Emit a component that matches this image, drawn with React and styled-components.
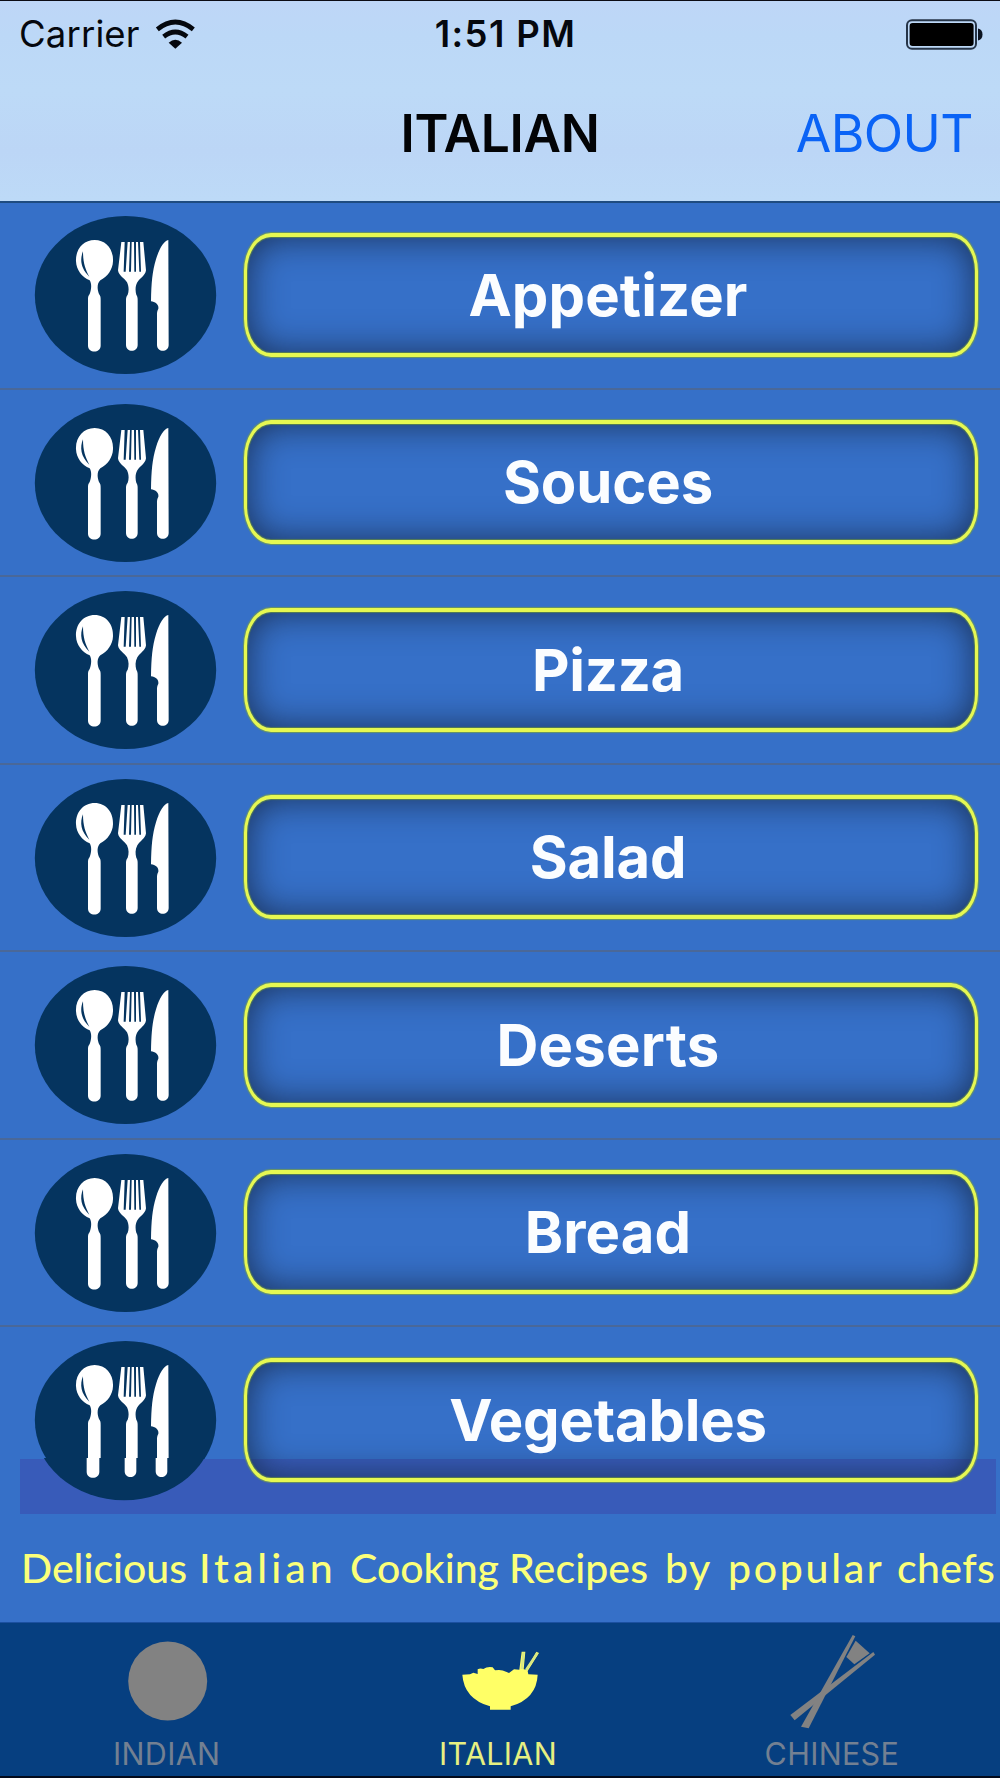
import React from "react";
import styled, { createGlobalStyle } from "styled-components";

const GlobalStyle = createGlobalStyle`
  * { box-sizing: border-box; }
  body { margin: 0; background: #3670c8; }
`;

const Screen = styled.div`
  width: 1000px;
  height: 1778px;
  display: flex;
  flex-direction: column;
  overflow: hidden;
  background: #3670c8;
  border-top: 1px solid #0b0b14;
  border-bottom: 2px solid #020a1c;
  font-family: Inter, "Liberation Sans", sans-serif;
`;

const Header = styled.header`
  flex: none;
  height: 201px;
  position: relative;
  background: linear-gradient(#bed6f7 0, #bcd8f7 34px, #bddaf7 90px, #bcd6f6 150px, #bddaf7 199px);
  border-bottom: 1px solid #1f4c80;
  box-shadow: 0 1px 0 #1f4c80;
`;

const StatusBar = styled.div`
  height: 66px;
  display: grid;
  grid-template-columns: 1fr auto 1fr;
  align-items: center;
  padding: 0 17px 0 19px;
`;

const StatusSide = styled.div`
  display: flex;
  align-items: center;
  gap: ${(p) => p.$gap || 0}px;
  justify-content: ${(p) => p.$align || "flex-start"};
`;

const StatusText = styled.span`
  font-size: 36.5px;
  line-height: 44px;
  font-weight: ${(p) => p.$weight || 400};
  letter-spacing: ${(p) => p.$spacing || 0}px;
  padding-left: ${(p) => p.$indent || 0}px;
  color: #05080e;
`;

const NavBar = styled.nav`
  height: 132px;
  display: grid;
  grid-template-columns: 1fr auto 1fr;
  align-items: center;
  padding-right: 27px;
  padding-left: 27px;
`;

const Title = styled.h1`
  grid-column: 2;
  margin: 0;
  font-size: 51.5px;
  line-height: 60px;
  font-weight: 600;
  letter-spacing: -0.3px;
  color: #030406;
`;

const NavLink = styled.a`
  justify-self: end;
  font-size: 51.5px;
  line-height: 60px;
  letter-spacing: -0.6px;
  color: #0a63f6;
`;

const List = styled.main`
  flex: none;
  display: flex;
  flex-direction: column;
`;

const Row = styled.div`
  height: 187.5px;
  display: flex;
  align-items: center;
  gap: 28px;
  padding: 0 22px 0 35px;
  border-bottom: 2px solid ${(p) => (p.$last ? "transparent" : "#4a6899")};
  background: ${(p) =>
    p.$last ? "linear-gradient(#385bb9, #385bb9) 20px 132px / 976px 55px no-repeat" : "none"};
`;

const CategoryButton = styled.button`
  flex: 1;
  height: 124px;
  margin: 0;
  padding: 0 6px 0 0;
  border: solid #e6f851;
  border-width: 4px 3px;
  border-radius: 27px / 38px;
  background: transparent;
  box-shadow: 0 0 1px 1px rgba(120, 160, 70, 0.8), inset 0 0 1px 1px rgba(95, 135, 70, 0.85),
    inset 0 0 36px rgba(24, 46, 84, 0.98);
  font-family: inherit;
  font-size: 58px;
  line-height: 70px;
  font-weight: 700;
  letter-spacing: ${(p) => p.$spacing}px;
  color: #fbfdff;
`;

const Tagline = styled.p`
  flex: 1;
  margin: 0;
  padding-left: 21px;
  display: flex;
  align-items: center;
  font-family: Lato, sans-serif;
  font-size: 41px;
  line-height: 50px;
  font-weight: 500;
  white-space: pre;
  color: #fbff7a;
`;

const Word = styled.span`
  flex: none;
  width: ${(p) => p.$width}px;
  letter-spacing: ${(p) => p.$spacing}px;
`;

const TabBar = styled.footer`
  flex: none;
  height: 154px;
  display: grid;
  grid-template-columns: repeat(3, 1fr);
  background: #063f80;
  border-top: 1px solid #1b50a0;
`;

const Tab = styled.div`
  display: flex;
  flex-direction: column;
  align-items: center;
  padding-top: 1px;
  color: ${(p) => (p.$active ? "#ffff66" : "#828282")};
`;

const TabLabel = styled.span`
  margin-top: 2px;
  padding-right: ${(p) => p.$nudge || 0}px;
  font-size: 30.5px;
  line-height: 36px;
  letter-spacing: ${(p) => p.$spacing}px;
  color: ${(p) => (p.$active ? "#e6f081" : "#738092")};
`;

const Icon = styled.svg`
  display: block;
  flex: none;
  overflow: visible;
`;

const RowIcon = styled(Icon)`
  margin-top: 1px;
`;

function WifiIcon() {
  return (
    <Icon width="39" height="29" viewBox="470 56 117 87">
      <g fill="none" stroke="#05080e">
        <path d="M474 84 Q528 40 582 84" strokeWidth="14" />
        <path d="M493 106 Q528 78 563 106" strokeWidth="14" />
      </g>
      <path d="M508 124 Q528 106 548 124 L528 142 Z" fill="#05080e" />
    </Icon>
  );
}

function BatteryIcon() {
  return (
    <Icon width="78" height="31" viewBox="0 0 78 31">
      <rect x="2" y="1.2" width="69" height="28.6" rx="5" fill="none" stroke="#263548" strokeWidth="2" />
      <rect x="4.6" y="4" width="64" height="23" rx="3" fill="#000" />
      <path d="M73 9.5 Q77.5 10.5 77.5 15.5 Q77.5 20.5 73 21.5 Z" fill="#0b1320" />
    </Icon>
  );
}

function Cutlery() {
  return (
    <>
      <ellipse cx="376.5" cy="287" rx="272" ry="237" fill="#05345f" />
      <g fill="#fff">
        <path d="M284 122 C318 122 341 150 339 186 C338 212 322 232 301 243 C291 252 291 268 297 284 C302 290 302 294 302 302 V439 C302 462 264 462 264 439 V302 C264 294 264 290 269 284 C275 268 275 252 269 243 C246 234 229 212 228 186 C226 150 250 122 284 122 Z" />
        <path d="M364 128 H374 L371 217 H377 L383 128 H390 L387 217 H393 L395 128 H402 L403 217 H408 L408 128 H414 L418 217 H423 L420 128 H430 L438 213 C436 230 420 235 412 249 C405 262 406 275 409 286 C413 292 413 297 413 304 V437 C413 460 378 460 378 437 V304 C378 297 378 292 383 286 C387 275 387 262 381 249 C373 235 356 230 354 213 Z" />
        <path d="M505 122 C492 124 478 147 468 180 C457 216 454 250 453 306 C466 307 477 316 475 328 C471 335 471 340 471 348 V437 C471 460 506 460 506 437 Z" />
      </g>
      <path d="M249 156 C239 180 242 208 268 232 C256 210 249 190 249 156 Z" fill="#05345f" />
    </>
  );
}

function CutleryIcon({ split }) {
  return (
    <RowIcon width="181" height="158" viewBox="105 50 543 474">
      {split ? (
        <>
          <clipPath id="cutlery-upper"><rect x="90" y="40" width="580" height="364" /></clipPath>
          <clipPath id="cutlery-lower"><rect x="90" y="401" width="580" height="140" /></clipPath>
          <g clipPath="url(#cutlery-upper)"><Cutlery /></g>
          <g clipPath="url(#cutlery-lower)"><g transform="translate(-4 4)"><Cutlery /></g></g>
        </>
      ) : (
        <Cutlery />
      )}
    </RowIcon>
  );
}

function PlateIcon() {
  return (
    <Icon width="120" height="110" viewBox="107 1624 120 110">
      <circle cx="167.7" cy="1681" r="39.5" fill="currentColor" />
    </Icon>
  );
}

function BowlIcon() {
  return (
    <Icon width="120" height="110" viewBox="120 12 360 330">
      <g fill="currentColor">
        <path d="M187 164 L210 163 L220 158 L233 162 L233 148 Q241 143 250 147 Q262 139 278 142 L285 151 Q304 147 318 155 L327 159 L342 148 L358 149 L365 95 L376 95 L371 148 L379 149 L409 95 L417 99 L383 153 L385 163 L413 164 Q410 236 332 259 V269 H270 V259 Q192 236 187 164 Z" />
      </g>
      <path d="M371 97 L365 147 M412 99 L378 150" stroke="#d8e884" strokeWidth="7" fill="none" />
    </Icon>
  );
}

function ChopsticksIcon() {
  return (
    <Icon width="120" height="110" viewBox="159 42 360 330">
      <g fill="currentColor">
        <path d="M398 75 L406 79 L266 355 L243 350 Z" />
        <path d="M460 126 L465 134 L224 331 L211 315 Z" />
        <path d="M407 92 L449 130 L403 163 L379 141 Z" />
      </g>
    </Icon>
  );
}

const categories = [
  { name: "Appetizer", spacing: 0.1 },
  { name: "Souces", spacing: -0.1 },
  { name: "Pizza", spacing: -0.3 },
  { name: "Salad", spacing: -0.2 },
  { name: "Deserts", spacing: 0.2 },
  { name: "Bread", spacing: 0.1 },
  { name: "Vegetables", spacing: -0.25 },
];

const tagline = [
  { word: "Delicious", width: 178, spacing: 0 },
  { word: "Italian", width: 151, spacing: 4 },
  { word: "Cooking", width: 159, spacing: 0 },
  { word: "Recipes", width: 156, spacing: 0.1 },
  { word: "by", width: 63, spacing: 1.5 },
  { word: "popular", width: 169, spacing: 2.7 },
  { word: "chefs", width: 103, spacing: 0.4 },
];

const tabs = [
  { name: "INDIAN", icon: PlateIcon, spacing: 0.35 },
  { name: "ITALIAN", icon: BowlIcon, spacing: 0.3, active: true, nudge: 4 },
  { name: "CHINESE", icon: ChopsticksIcon, spacing: 0.3, nudge: 3 },
];

export default function App() {
  return (
    <>
      <GlobalStyle />
      <Screen>
        <Header>
          <StatusBar>
            <StatusSide $gap={16}>
              <StatusText $spacing={0.15}>Carrier</StatusText>
              <WifiIcon />
            </StatusSide>
            <StatusText $weight={600} $spacing={1.4} $indent={9}>1:51 PM</StatusText>
            <StatusSide $align="flex-end">
              <BatteryIcon />
            </StatusSide>
          </StatusBar>
          <NavBar>
            <Title>ITALIAN</Title>
            <NavLink>ABOUT</NavLink>
          </NavBar>
        </Header>
        <List>
          {categories.map((c, i) => {
            const last = i === categories.length - 1;
            return (
              <Row key={c.name} $last={last}>
                <CutleryIcon split={last} />
                <CategoryButton $spacing={c.spacing}>{c.name}</CategoryButton>
              </Row>
            );
          })}
        </List>
        <Tagline>
          {tagline.map(({ word, width, spacing }) => (
            <Word key={word} $width={width} $spacing={spacing}>
              {word}
            </Word>
          ))}
        </Tagline>
        <TabBar>
          {tabs.map(({ name, icon: TabIcon, spacing, active, nudge }) => (
            <Tab key={name} $active={active}>
              <TabIcon />
              <TabLabel $active={active} $spacing={spacing} $nudge={nudge}>
                {name}
              </TabLabel>
            </Tab>
          ))}
        </TabBar>
      </Screen>
    </>
  );
}
